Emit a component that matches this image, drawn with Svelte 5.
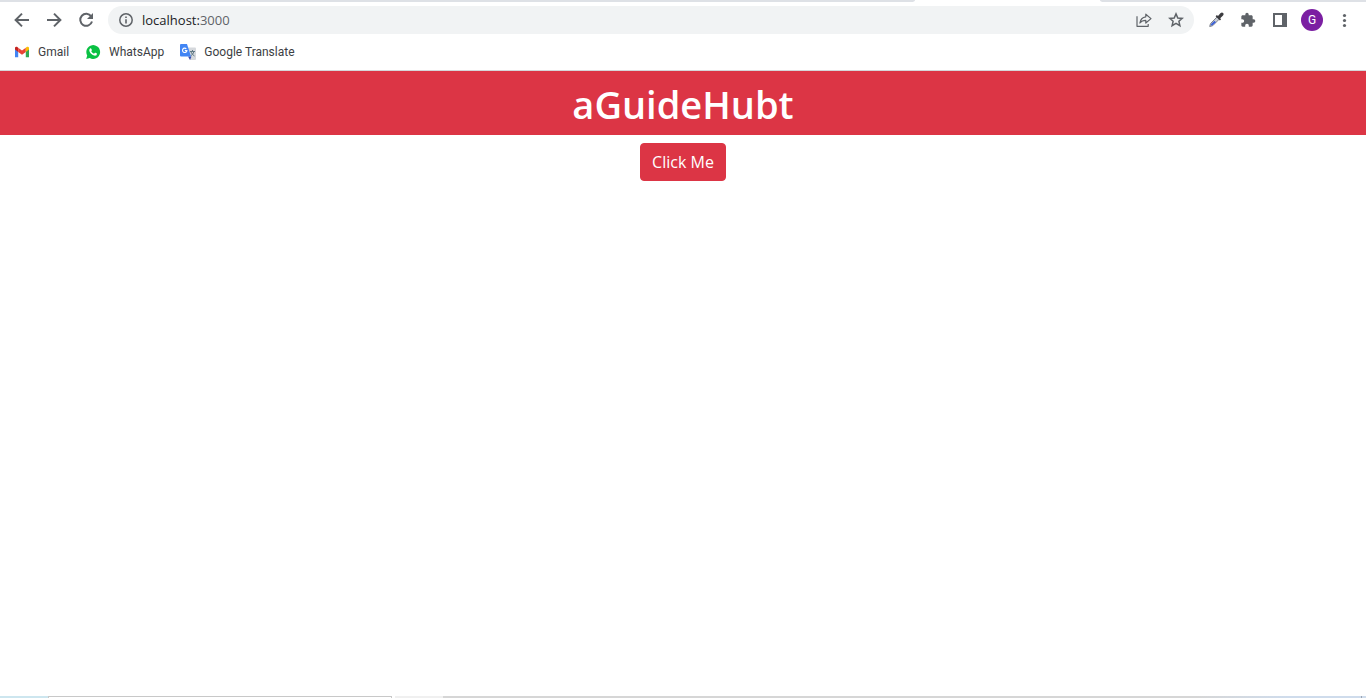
<script>
  let clicks = $state(0);
</script>

<div class="window">
  <div class="tabs"><span class="tab-left"></span><span class="tab-active"></span><span class="tab-right"></span></div>
  <header>
    <nav class="toolbar" aria-label="Browser">
      <button class="icon" aria-label="Back">
        <svg width="16" height="16" viewBox="0 0 16 16"><path d="M15 8H2.2M8 1.6L1.6 8L8 14.4" fill="none" stroke="#5f6368" stroke-width="2" /></svg>
      </button>
      <button class="icon" aria-label="Forward">
        <svg width="16" height="16" viewBox="0 0 16 16"><path d="M1 8H13.8M8 1.6L14.4 8L8 14.4" fill="none" stroke="#5f6368" stroke-width="2" /></svg>
      </button>
      <button class="icon" aria-label="Reload">
        <svg width="16" height="16" viewBox="0 0 16 16"><path d="M13.2 4.4A6 6 0 1 0 14 9.5" fill="none" stroke="#5f6368" stroke-width="2" /><path d="M15 1V7H9z" fill="#5f6368" /></svg>
      </button>
      <div class="address">
        <svg width="16" height="16" viewBox="0 0 16 16"><circle cx="8" cy="8" r="6.2" fill="none" stroke="#5f6368" stroke-width="1.5" /><path d="M7.2 4.4h1.6V6H7.2zM7.2 7.2h1.6v4.4H7.2z" fill="#5f6368" /></svg>
        <span class="url">localhost:<span class="port">3000</span></span>
        <button class="icon" aria-label="Share">
          <svg width="16" height="16" viewBox="0 0 16 16"><path d="M1 4.3V14.3H12.2V12M9.8 2.2L15 6.6L9.8 11V8.4C7 8.4 5.3 9.2 3.9 11C4.4 7.6 6.2 5.2 9.8 4.8Z" fill="none" stroke="#5f6368" stroke-width="1.2" stroke-linejoin="round" /></svg>
        </button>
        <button class="icon" aria-label="Bookmark">
          <svg width="16" height="16" viewBox="0 0 16 16"><path d="M8 1.9L9.8 6L14.2 6.4L10.9 9.3L11.9 13.7L8 11.4L4.1 13.7L5.1 9.3L1.8 6.4L6.2 6Z" fill="none" stroke="#5f6368" stroke-width="1.5" /></svg>
        </button>
      </div>
      <div class="extensions">
        <button class="icon" aria-label="Color picker">
          <svg width="16" height="16" viewBox="0 0 16 16"><path d="M1.7 14.5L2.5 11.6L9 5L11.2 7.2L4.7 13.7Z" fill="#c9ced6" stroke="#7d8188" stroke-width="1" /><path d="M2.5 13.5L3.3 11.8L6.5 8.8L8 10.3L4.5 13.2Z" fill="#3e62d8" /><path d="M7.6 4.2L8.9 3L10 3.9L12.4 1.2Q14 0 15.1 1Q16.2 2.3 14.8 3.7L12.2 6.2L13.1 7.2L11.9 8.4Z" fill="#3c3c40" /></svg>
        </button>
        <button class="icon" aria-label="Extensions">
          <svg width="16" height="16" viewBox="0 0 24 24"><path fill="#5f6368" d="M20.5 11H19V7c0-1.1-.9-2-2-2h-4V3.500a2.500 2.500 0 0 0-5 0V5H4c-1.100 0-1.990.9-1.990 2v3.800H3.500c1.490 0 2.700 1.210 2.700 2.700s-1.210 2.700-2.700 2.700H2V20c0 1.100.9 2 2 2h3.800v-1.500c0-1.490 1.210-2.700 2.700-2.700s2.700 1.210 2.700 2.700V22H17c1.100 0 2-.9 2-2v-4h1.500a2.500 2.500 0 0 0 0-5z" /></svg>
        </button>
        <button class="icon" aria-label="Side panel">
          <svg width="16" height="16" viewBox="0 0 16 16"><path fill="#5f6368" fill-rule="evenodd" d="M1 1H15V15H1zM3 3V13H10V3z" /></svg>
        </button>
        <button class="avatar" aria-label="Profile">G</button>
        <button class="icon" aria-label="Menu">
          <svg width="16" height="16" viewBox="0 0 16 16" fill="#5f6368"><circle cx="8.500" cy="3.500" r="1.600" /><circle cx="8.500" cy="8.500" r="1.600" /><circle cx="8.500" cy="13.500" r="1.600" /></svg>
        </button>
      </div>
    </nav>
    <nav class="bookmarks" aria-label="Bookmarks">
      <a href="#gmail">
        <svg width="16" height="16" viewBox="0 0 16 16"><path d="M1 4V13.200H4.200V7.200L1 4.500z" fill="#4285f4" /><path d="M11.800 7V13.200H15V4.500z" fill="#34a853" /><path d="M1 5V3.800Q1.300 2.300 3 2.800L4.200 3.700V8L1 5.600z" fill="#c5221f" /><path d="M4.200 3.700L8 6.600L11.800 3.700V8L8 10.800L4.200 8z" fill="#ea4335" /><path d="M11.800 3.700L13 2.800Q14.700 2.300 15 3.800V5.600L11.800 8z" fill="#fbbc04" /></svg>
        <span>Gmail</span>
      </a>
      <a href="#whatsapp">
        <svg width="16" height="16" viewBox="0 0 16 16"><path d="M1.200 14.900L2.200 11.400A6.900 6.900 0 1 1 4.800 14z" fill="#0ac143" /><path d="M5 4.600Q5.800 3.800 6.300 4.700L6.900 6Q7 6.500 6.200 7.200Q7.200 9 9 9.700L9.900 8.800Q10.200 8.500 10.600 8.800L12 9.500Q12.100 11.700 10 11.700Q7.700 11.600 5.800 9.500Q3.200 6.600 5 4.600z" fill="#fff" /></svg>
        <span>WhatsApp</span>
      </a>
      <a href="#translate">
        <svg width="16" height="16" viewBox="0 0 16 16"><path d="M6 3.500H15Q16 3.500 16 4.500V15Q16 16 15 16H10z" fill="#d5d8dc" /><path d="M10 7.500H15M12.500 6V7.500M14 7.500Q13.200 10.500 10.500 12M11 8Q12 10.500 14.500 12" fill="none" stroke="#607985" stroke-width="1" /><path d="M8 12.500H11.500L10 16z" fill="#3949ab" /><path d="M1 0H7L11 12.500H1Q0 12.500 0 11.500V1Q0 0 1 0z" fill="#4285f4" /><path d="M6.300 4.800A2.200 2.200 0 1 0 6.900 6.600H4.800" fill="none" stroke="#fff" stroke-width="1.100" /></svg>
        <span>Google Translate</span>
      </a>
    </nav>
  </header>
  <main>
    <h1>aGuideHubt</h1>
    <button class="primary" onclick={() => clicks++}>Click Me</button>
  </main>
  <footer><span class="start"></span><span class="search"></span><span class="task"></span><span class="rest"></span><span class="desktop"></span></footer>
</div>

<style>
  :global(body) { margin: 0; background: #fff; }
  .window { min-height: 100vh; display: flex; flex-direction: column; font-family: "Open Sans", "Noto Sans", sans-serif; }
  button { font: inherit; border: 0; padding: 0; background: none; cursor: pointer; }
  svg { display: block; flex: none; }
  .tabs { display: flex; height: 2px; }
  .tab-left { width: 67%; background: #dee1e6; border-bottom-right-radius: 4px 2px; }
  .tab-active { flex: 1; }
  .tab-right { width: 266px; background: #dee1e6; border-bottom-left-radius: 4px 2px; }
  header { border-bottom: 1px solid #d5d7da; }
  .toolbar { display: flex; align-items: center; gap: 16px; height: 36px; padding: 0 14px; }
  .icon { width: 16px; height: 16px; flex: none; }
  .address { flex: 1; display: flex; align-items: center; gap: 16px; height: 28px; padding: 0 10px; margin-left: -2px; border-radius: 14px; background: #f1f3f4; }
  .url { flex: 1; margin-left: -8px; font-size: 13px; line-height: 20px; color: #202124; }
  .port { color: #5f6368; }
  .extensions { display: flex; align-items: center; gap: 16px; margin-left: -2px; }
  .avatar { width: 22px; height: 22px; margin: 0 -3px; border-radius: 50%; background: #7b1fa2; color: #fff; font: 12px/22px Roboto, sans-serif; }
  .bookmarks { display: flex; align-items: center; gap: 16px; height: 28px; padding: 0 14px 4px; }
  .bookmarks a { display: flex; align-items: center; gap: 8px; color: #3c4043; font: 12px/16px Roboto, sans-serif; text-decoration: none; }
  main { flex: 1; display: flex; flex-direction: column; align-items: center; gap: 8px; }
  h1 { align-self: stretch; margin: 0; padding: 9px 8px 7px; background: #dc3545; color: #fff; font-size: 38px; line-height: 48px; font-weight: 600; text-align: center; }
  .primary { padding: 6px 11px; border: 1px solid #dc3545; border-radius: 4px; background: #dc3545; color: #fff; font-size: 16px; line-height: 24px; }
  footer { display: flex; height: 2px; }
  .start { width: 48px; background: #cde6ef; }
  .search { box-sizing: border-box; width: 344px; border: 1px solid #c8c8c8; border-bottom: 0; }
  .task { width: 48px; margin-left: 3px; background: #f0f0f0; }
  .rest { flex: 1; background: linear-gradient(90deg, #d6d6d6 82%, #cfdcec 92%); }
  .desktop { width: 4px; border-left: 1px solid #9ba5b3; background: #cfdcec; }
</style>
